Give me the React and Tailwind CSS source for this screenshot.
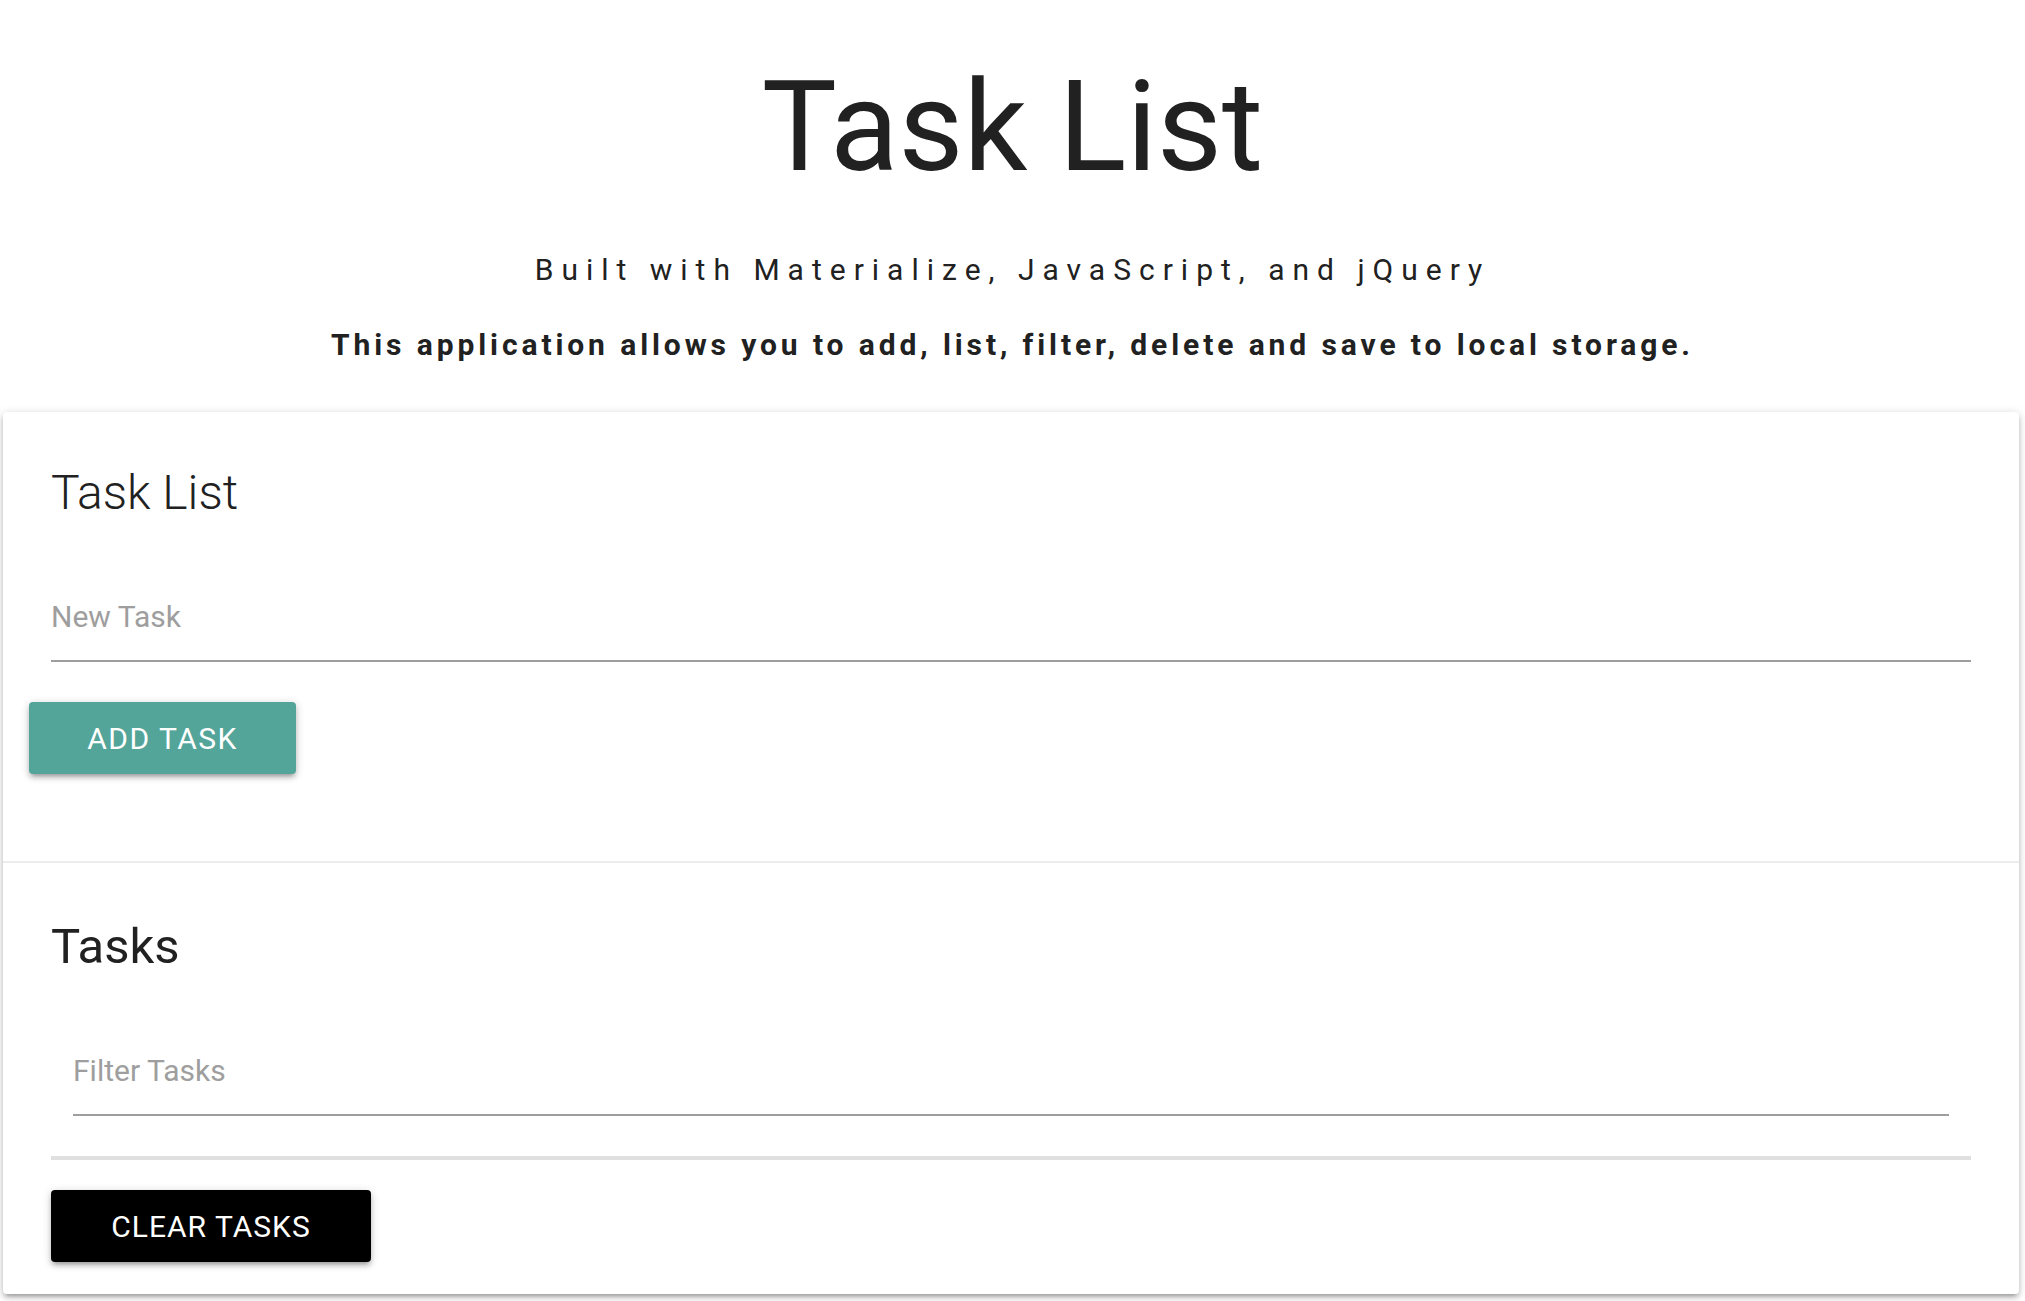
import { useState } from 'react';

const depth1 =
  'shadow-[0_4px_4px_0_rgba(0,0,0,0.14),0_6px_2px_-4px_rgba(0,0,0,0.12),0_2px_10px_0_rgba(0,0,0,0.2)]';

function App() {
  const [task, setTask] = useState('');
  const [filter, setFilter] = useState('');

  return (
    <div className="min-h-screen bg-white font-['Roboto',sans-serif] text-[#212121]">
      {/* Page header */}
      <header className="pt-[64px] text-center">
        <h1 className="text-[126px] leading-[126px] font-normal">Task List</h1>
        <p className="mt-[65px] text-[30px] leading-[30px] tracking-[8px]">
          Built with Materialize, JavaScript, and jQuery
        </p>
        <p className="mt-[45px] text-[30px] leading-[30px] font-bold tracking-[3.9px]">
          This application allows you to add, list, filter, delete and save to local storage.
        </p>
      </header>

      {/* Card */}
      <div className={`mt-[52px] ml-[3px] mr-[6px] rounded-[4px] bg-white ${depth1}`}>
        <div className="px-[48px] pt-[57px] pb-[87px]">
          <span className="block text-[48px] leading-[48px] font-light">Task List</span>
          <form className="mt-[55px]" onSubmit={(e) => e.preventDefault()}>
            <input
              type="text"
              value={task}
              onChange={(e) => setTask(e.target.value)}
              placeholder="New Task"
              className="block h-[90px] w-full border-b-2 border-[#9e9e9e] bg-transparent text-[30px] outline-none placeholder:text-[#9e9e9e]"
            />
            <button
              type="submit"
              className={`mt-[40px] -ml-[22px] h-[72px] w-[267px] rounded-[4px] bg-[#53a59a] text-[30px] tracking-[1.5px] text-white uppercase ${depth1}`}
            >
              Add Task
            </button>
          </form>
        </div>

        <div className="border-t-2 border-[#ececec] px-[48px] pt-[59px] pb-[32px]">
          <span className="block text-[49px] leading-[50px]">Tasks</span>
          <div className="mt-[54px] px-[22px]">
            <input
              type="text"
              value={filter}
              onChange={(e) => setFilter(e.target.value)}
              placeholder="Filter Tasks"
              className="block h-[90px] w-full border-b-2 border-[#9e9e9e] bg-transparent text-[30px] outline-none placeholder:text-[#9e9e9e]"
            />
          </div>
          <ul className="mt-[40px] h-[4px] border-y-2 border-[#e0e0e0]"></ul>
          <button
            className={`mt-[30px] h-[72px] w-[320px] rounded-[4px] bg-black text-[30px] tracking-[1px] text-white uppercase ${depth1}`}
          >
            Clear Tasks
          </button>
        </div>
      </div>
    </div>
  );
}

export default App;
